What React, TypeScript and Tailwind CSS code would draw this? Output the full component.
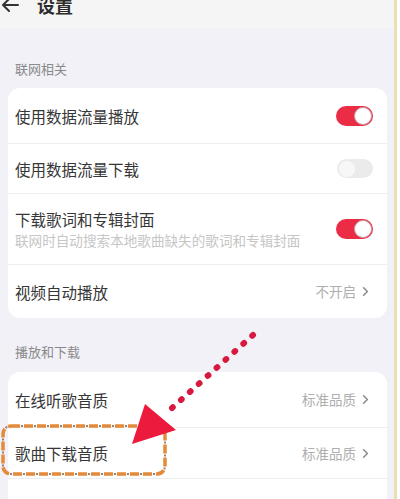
import { ChevronRight } from "lucide-react"

const font = { fontFamily: '"Noto Sans CJK SC", "Noto Sans", sans-serif' }

const Toggle = ({ on }: { on: boolean }) =>
  on ? (
    <div className="flex h-[20px] w-[37px] items-center justify-end rounded-full bg-[#ec2b45] pr-[1px]">
      <div className="h-[18px] w-[18px] rounded-full border border-[#c9a0a6] bg-white" />
    </div>
  ) : (
    <div className="flex h-[19px] w-[36px] items-center rounded-full bg-[#ebebeb] pl-[2px]">
      <div className="h-[16px] w-[16px] rounded-full bg-[#f7f7f7]" />
    </div>
  )

const Value = ({ text }: { text: string }) => (
  <div className="flex items-center gap-[2px] text-[13.5px] text-[#aeaeae]">
    <span>{text}</span>
    <ChevronRight size={15} strokeWidth={2.6} className="text-[#8d8d8d]" />
  </div>
)

interface RowProps {
  title: string
  sub?: string
  right: React.ReactNode
  h: string
  line?: boolean
}

const Row = ({ title, sub, right, h, line = true }: RowProps) => (
  <div className={`flex items-center justify-between pl-[7px] pr-[14px] ${h} ${line ? "border-b border-[#eeeeee]" : ""}`}>
    <div className="flex flex-col">
      <span className="text-[15.5px] leading-[20px] text-[#363636]">{title}</span>
      {sub && <span className="mt-[2px] text-[13.6px] leading-[18px] text-[#c6c6c6]">{sub}</span>}
    </div>
    {right}
  </div>
)

export default function App() {
  return (
    <div className="relative flex h-[499px] w-[400px] overflow-hidden bg-white" style={font}>
      <div className="flex w-[394px] shrink-0 flex-col bg-[#f2f1f8]">
        {/* Header */}
        <div className="flex h-[28px] shrink-0 items-start bg-[#f5f5f6]">
          <div className="-mt-[8px] flex items-center gap-[18px] pl-[1px]">
            <svg width="18" height="16" viewBox="0 0 18 16" fill="none" stroke="#333" strokeWidth="2" strokeLinecap="round" strokeLinejoin="round">
              <path d="M17 8H2M8 2L2 8l6 6" />
            </svg>
            <span className="text-[18px] font-bold leading-[26px] text-[#2c2c2c]">设置</span>
          </div>
        </div>

        <div className="flex h-[60px] shrink-0 items-center pt-[22px] pl-[15px] text-[13px] text-[#8a8a8a]">联网相关</div>

        <div className="ml-[8px] mr-[7px] shrink-0 rounded-xl bg-white">
          <Row title="使用数据流量播放" h="h-[56px]" right={<Toggle on />} />
          <Row title="使用数据流量下载" h="h-[50px]" right={<Toggle on={false} />} />
          <Row
            title="下载歌词和专辑封面"
            sub="联网时自动搜索本地歌曲缺失的歌词和专辑封面"
            h="h-[71px]"
            right={<Toggle on />}
          />
          <Row title="视频自动播放" h="h-[53px]" line={false} right={<Value text="不开启" />} />
        </div>

        <div className="flex h-[54px] shrink-0 items-center pt-[14px] pl-[15px] text-[13px] text-[#8a8a8a]">播放和下载</div>

        <div className="ml-[8px] mr-[7px] shrink-0 rounded-t-xl bg-white">
          <Row title="在线听歌音质" h="h-[56px]" right={<Value text="标准品质" />} />
          <Row title="歌曲下载音质" h="h-[51px]" right={<Value text="标准品质" />} />
          <div className="h-[30px]" />
        </div>
      </div>
      <div className="w-[3px] shrink-0 bg-[#e9e0b4]" />
      <div className="flex-1 bg-white" />

      {/* Annotation overlay */}
      <svg className="pointer-events-none absolute inset-0" width="400" height="499" viewBox="0 0 400 499">
        <rect x="3" y="426" width="162" height="48" rx="8" fill="none" stroke="#e48a3a" strokeWidth="3.5" strokeDasharray="9 4" />
        <rect x="3" y="426" width="162" height="48" rx="8" fill="none" stroke="#6b4a3a" strokeWidth="2" strokeDasharray="2 11" strokeDashoffset="-10" opacity="0.7" />
        <line x1="253" y1="335" x2="172" y2="408" stroke="#d8193f" strokeWidth="6" strokeLinecap="round" strokeDasharray="1 11" />
        <polygon points="132,444 145,404 176,430" fill="#ec1a3d" />
      </svg>
    </div>
  )
}
